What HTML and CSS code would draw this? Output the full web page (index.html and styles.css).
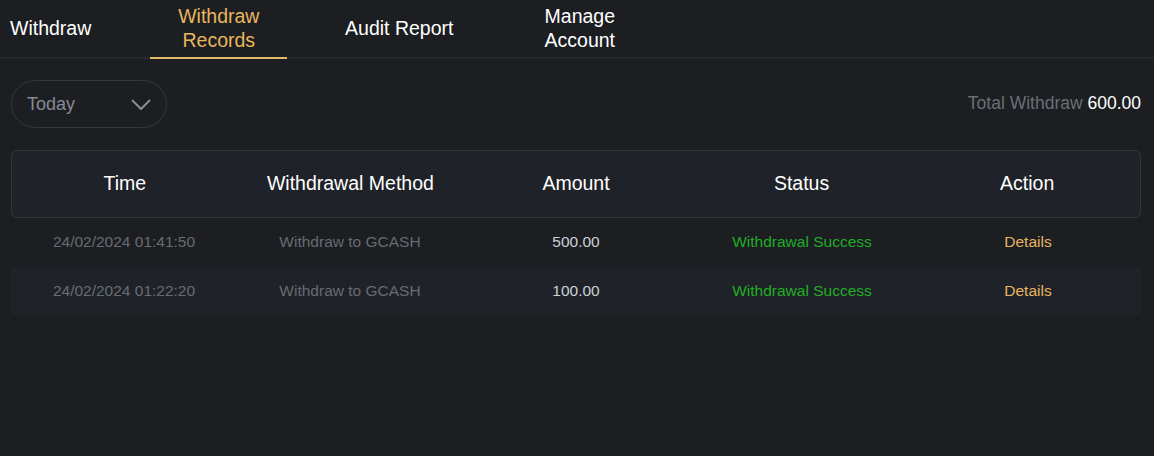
FILE: index.html
```html
<!DOCTYPE html>
<html lang="en">
<head>
<meta charset="utf-8">
<title>Withdraw Records</title>
<link rel="stylesheet" href="styles.css">
</head>
<body>
<nav class="tabs">
  <div class="tab tab-first">Withdraw</div>
  <div class="tab tab-active">Withdraw<br>Records</div>
  <div class="tab">Audit Report</div>
  <div class="tab">Manage<br>Account</div>
</nav>
<div class="toolbar">
  <div class="select">
    <span class="select-label">Today</span>
    <svg class="chevron" width="20" height="12" viewBox="0 0 20 12"><path d="M1.5 1.5 L10 10 L18.5 1.5" fill="none" stroke="#8a8e95" stroke-width="2" stroke-linecap="round" stroke-linejoin="round"/></svg>
  </div>
  <div class="total"><span class="total-label">Total Withdraw</span> <span class="total-value">600.00</span></div>
</div>
<div class="table">
  <div class="thead">
    <div class="cell">Time</div>
    <div class="cell">Withdrawal Method</div>
    <div class="cell">Amount</div>
    <div class="cell">Status</div>
    <div class="cell">Action</div>
  </div>
  <div class="row">
    <div class="cell muted">24/02/2024 01:41:50</div>
    <div class="cell muted">Withdraw to GCASH</div>
    <div class="cell amount">500.00</div>
    <div class="cell success">Withdrawal Success</div>
    <div class="cell link">Details</div>
  </div>
  <div class="row row-alt">
    <div class="cell muted">24/02/2024 01:22:20</div>
    <div class="cell muted">Withdraw to GCASH</div>
    <div class="cell amount">100.00</div>
    <div class="cell success">Withdrawal Success</div>
    <div class="cell link">Details</div>
  </div>
</div>
</body>
</html>
```

FILE: styles.css
```css
* { box-sizing: border-box; }
html, body {
  margin: 0;
  padding: 0;
  background: #1c1e22;
  font-family: "Liberation Sans", Arial, sans-serif;
  color: #ffffff;
}
.tabs {
  display: flex;
  align-items: stretch;
  height: 59px;
  border-bottom: 2px solid #26292e;
  padding-left: 10px;
}
.tab {
  font-size: 19.5px;
  line-height: 24px;
  color: #ffffff;
  width: 137px;
  text-align: center;
  display: flex;
  align-items: center;
  justify-content: center;
  margin-right: 43.5px;
  padding-bottom: 2px;
  margin-bottom: -2px;
  border-bottom: 2px solid transparent;
}
.tab-first {
  width: auto;
  justify-content: flex-start;
  margin-right: 59px;
}
.tab-active {
  color: #e9b65c;
  border-bottom-color: #e2b86a;
}
.toolbar {
  display: flex;
  justify-content: space-between;
  align-items: center;
  padding: 21px 13px 0 11px;
}
.select {
  width: 156px;
  height: 48px;
  border: 1px solid #34373d;
  border-radius: 24px;
  display: flex;
  align-items: center;
  justify-content: space-between;
  padding: 0 15px 0 15px;
}
.select-label {
  font-size: 18px;
  color: #868b94;
}
.chevron { display: block; margin-top: 1px; }
.total {
  font-size: 17.5px;
  margin-bottom: 1px;
}
.total-label { color: #6a6f77; }
.total-value { color: #ffffff; }
.table {
  margin: 22px 13px 0 11px;
}
.thead {
  display: grid;
  grid-template-columns: repeat(5, 1fr);
  height: 68px;
  align-items: center;
  background: #1f2228;
  border: 1px solid #33373d;
  border-radius: 6px;
  font-size: 19.5px;
  padding-bottom: 2px;
}
.row {
  display: grid;
  grid-template-columns: repeat(5, 1fr);
  height: 49px;
  align-items: center;
  font-size: 15.5px;
  border-radius: 4px;
  padding-bottom: 2px;
}
.row-alt { background: #1f2329; height: 48px; padding-bottom: 0; }
.cell { text-align: center; }
.muted { color: #676b72; }
.amount { color: #cdd0d6; }
.success { color: #1fae24; }
.link { color: #e6b45e; }
```
